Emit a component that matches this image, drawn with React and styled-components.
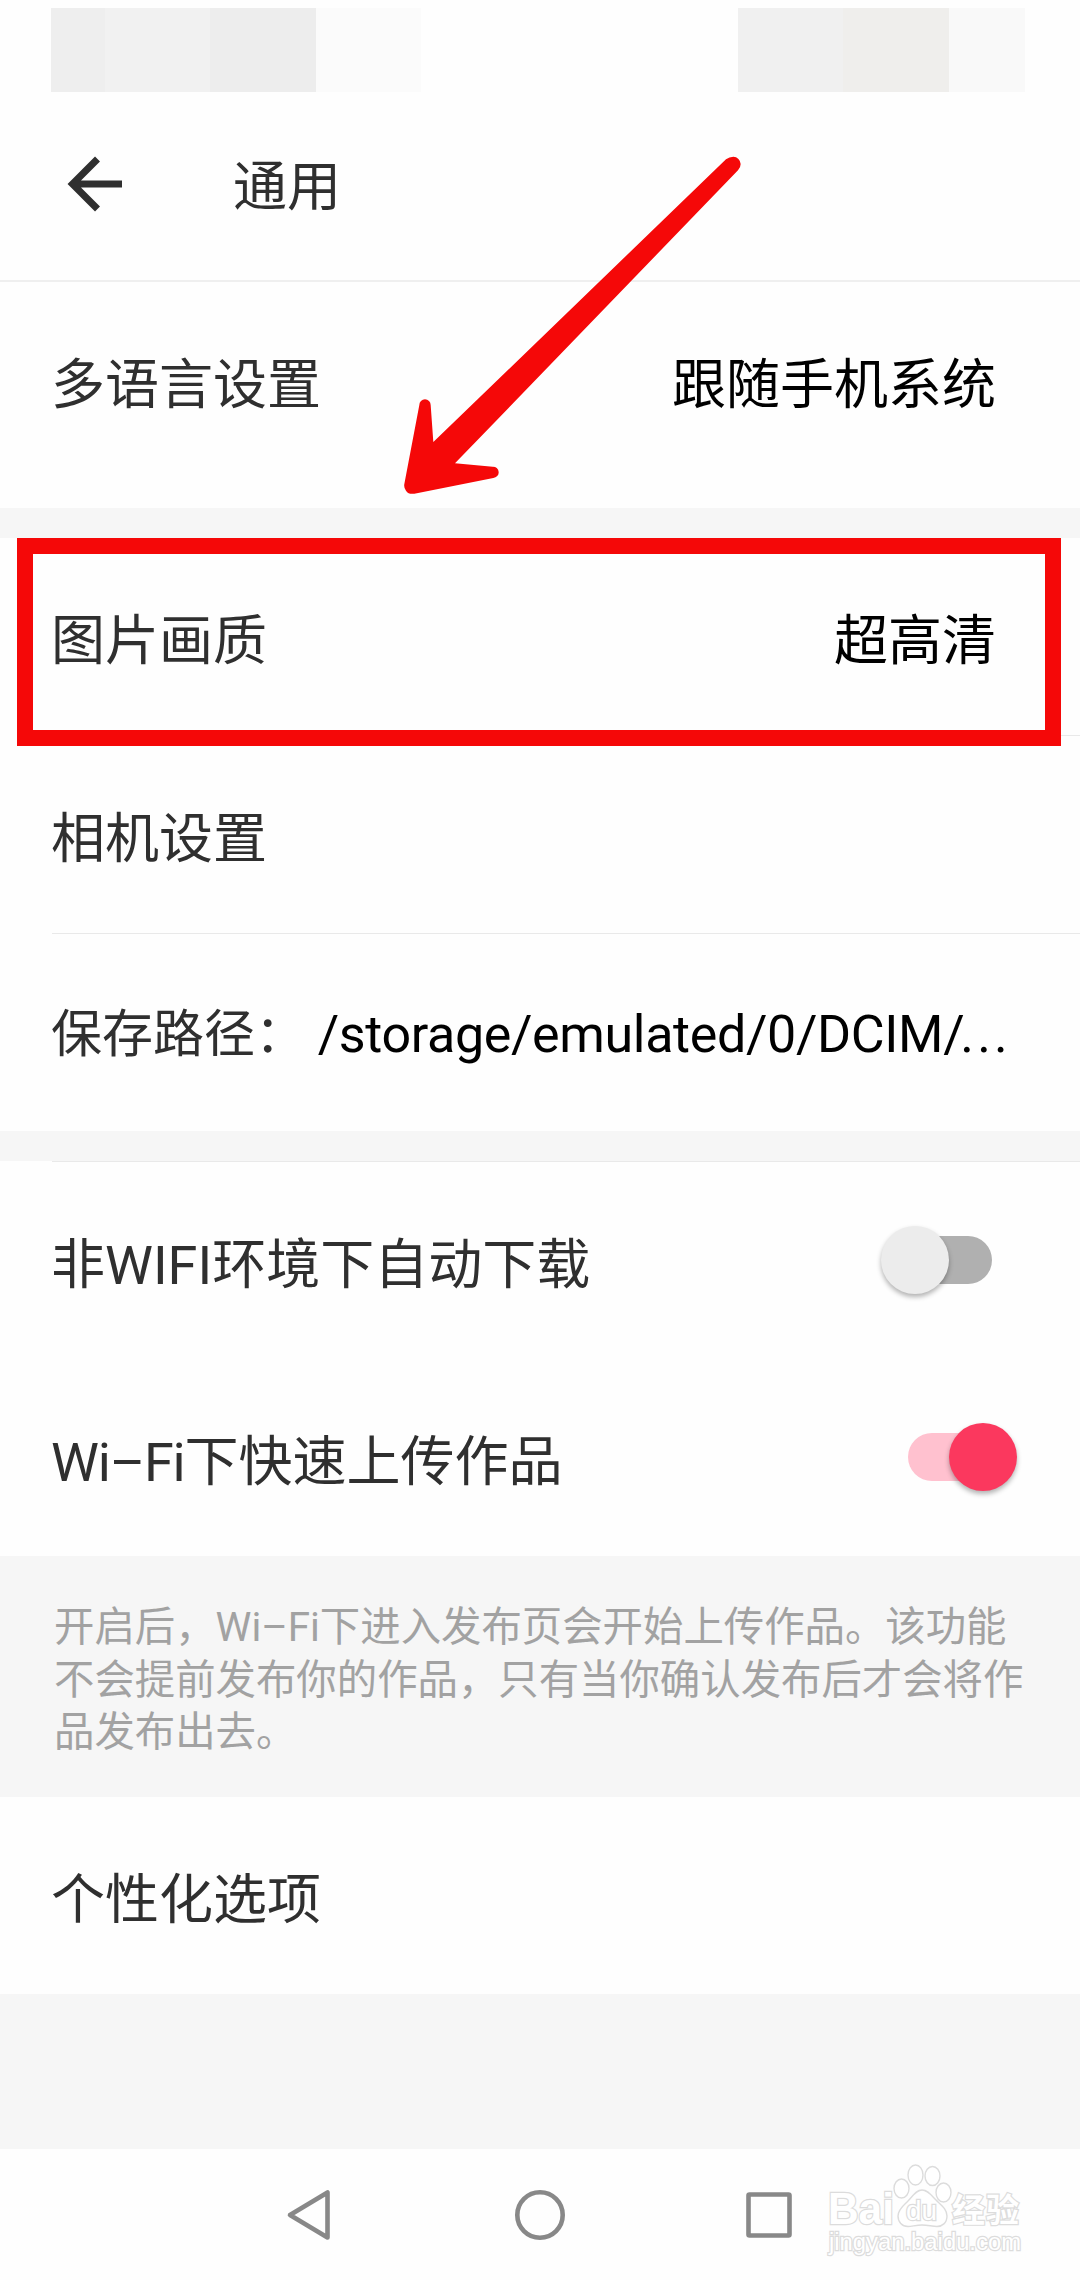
import React, { useState } from 'react';
import styled, { createGlobalStyle } from 'styled-components';

const GlobalStyle = createGlobalStyle`
  * {
    box-sizing: border-box;
  }

  body {
    margin: 0;
    background: #fefefe;
    font-family: Roboto, 'Noto Sans CJK SC', sans-serif;
    color: #2f2f2f;
  }
`;

const Page = styled.div`
  position: relative;
  display: flex;
  flex-direction: column;
  width: 1080px;
  height: 2280px;
  overflow: hidden;
  background: #fefefe;
`;

const StatusBar = styled.div`
  display: flex;
  justify-content: space-between;
  height: 92px;
  padding: 8px 55px 0 51px;
`;

const StatusGroup = styled.div`
  display: flex;
`;

const StatusBlock = styled.div`
  width: ${(props) => props.$width}px;
  background: ${(props) => props.$color};
`;

const Header = styled.header`
  display: flex;
  align-items: center;
  height: 190px;
  padding: 0 0 5px 67px;
  border-bottom: 2px solid #efefef;
`;

const BackButton = styled.button`
  display: flex;
  padding: 0;
  border: none;
  background: transparent;
  cursor: pointer;
`;

const Title = styled.h1`
  margin: 8px 0 0 110px;
  font-size: 54px;
  line-height: 60px;
  font-weight: 400;
`;

const Row = styled.div`
  display: flex;
  align-items: center;
  justify-content: space-between;
  flex: none;
  height: ${(props) => props.$height || 197}px;
  padding: ${(props) => props.$pad || '10px 84px 0 51px'};
`;

const Label = styled.span`
  font-size: ${(props) => props.$size || 54}px;
  line-height: 60px;
  white-space: nowrap;
`;

const Latin = styled.span`
  letter-spacing: -1.2px;
`;

const Value = styled.span`
  font-size: 54px;
  line-height: 60px;
  color: #000;
  white-space: nowrap;
`;

const PathValue = styled(Value)`
  font-size: 52px;
  letter-spacing: -0.35px;
`;

const Dots = styled.span`
  margin-left: -4px;
  letter-spacing: 3.2px;
`;

const Divider = styled.div`
  flex: none;
  height: 1px;
  margin-left: 52px;
  background: #e9e9e9;
`;

const Gap = styled.div`
  flex: none;
  height: ${(props) => props.$height}px;
  background: #f6f6f6;
`;

const Track = styled.button`
  position: relative;
  width: 84px;
  height: 48px;
  margin: 0 4px 12px 0;
  padding: 0;
  border: none;
  border-radius: 24px;
  background: ${(props) => (props.$on ? '#ffc1cf' : '#b0b0b0')};
  cursor: pointer;
`;

const Thumb = styled.span`
  position: absolute;
  top: -10px;
  left: ${(props) => (props.$on ? '41px' : '-27px')};
  width: 68px;
  height: 68px;
  border-radius: 50%;
  background: ${(props) => (props.$on ? '#fb385e' : '#ececec')};
  box-shadow: 0 3px 5px rgba(0, 0, 0, 0.3);
`;

const Hint = styled.p`
  flex: none;
  height: 241px;
  margin: 0;
  padding: 46px 50px 0 54px;
  background: #f6f6f6;
  color: #a2a2a2;
  font-size: 40.4px;
  line-height: 52.6px;
`;

const NavBar = styled.nav`
  display: flex;
  align-items: center;
  flex: none;
  height: 131px;
  padding-left: 286px;
`;

const NavIcon = styled.svg`
  display: block;
  flex: none;
  margin-right: ${(props) => props.$gap || 0}px;
  fill: none;
  stroke: #888;
  stroke-width: 4.6;
  stroke-linejoin: round;
`;

const Highlight = styled.div`
  position: absolute;
  top: 538px;
  left: 17px;
  width: 1044px;
  height: 208px;
  border: 16px solid #f50808;
`;

const Pointer = styled.svg`
  position: absolute;
  top: 130px;
  left: 360px;
  fill: #f50808;
`;

const Watermark = styled.svg`
  position: absolute;
  top: 2160px;
  left: 820px;
  fill: #fff;
  stroke: #dcdcdc;
  stroke-width: 1.4;

  text {
    font-family: 'Liberation Sans', 'Noto Sans CJK SC', sans-serif;
    paint-order: stroke;
    stroke-width: 2.4;
  }
`;

const Switch = ({ defaultOn }) => {
  const [on, setOn] = useState(defaultOn);
  return (
    <Track $on={on} role="switch" aria-checked={on} onClick={() => setOn(!on)}>
      <Thumb $on={on} />
    </Track>
  );
};

const App = () => {
  return (
    <Page>
      <GlobalStyle />
      <StatusBar>
        <StatusGroup>
          <StatusBlock $width={54} $color="#eeeeee" />
          <StatusBlock $width={105} $color="#f1f1f1" />
          <StatusBlock $width={106} $color="#ededed" />
          <StatusBlock $width={105} $color="#fbfbfb" />
        </StatusGroup>
        <StatusGroup>
          <StatusBlock $width={105} $color="#f0f0f0" />
          <StatusBlock $width={106} $color="#efeeec" />
          <StatusBlock $width={76} $color="#f9f9f9" />
        </StatusGroup>
      </StatusBar>

      <Header>
        <BackButton aria-label="返回">
          <svg width="56" height="56" viewBox="0 0 56 56" fill="none" stroke="#2f2f2f" strokeWidth="7">
            <path d="M55 28H6M30.5 3L5.5 28l25 25" />
          </svg>
        </BackButton>
        <Title>通用</Title>
      </Header>

      <Row $height={226} $pad="0 84px 18px 51px">
        <Label>多语言设置</Label>
        <Value>跟随手机系统</Value>
      </Row>
      <Gap $height={30} />
      <Row>
        <Label>图片画质</Label>
        <Value>超高清</Value>
      </Row>
      <Divider />
      <Row>
        <Label>相机设置</Label>
      </Row>
      <Divider />
      <Row $pad="5px 69px 0 51px">
        <Label $size={51}>保存路径：</Label>
        <PathValue>
          /storage/emulated/0/DCIM/<Dots>...</Dots>
        </PathValue>
      </Row>
      <Gap $height={30} />
      <Divider />
      <Row>
        <Label>非WIFI环境下自动下载</Label>
        <Switch defaultOn={false} />
      </Row>
      <Row>
        <Label>
          <Latin>Wi–Fi</Latin>下快速上传作品
        </Label>
        <Switch defaultOn />
      </Row>
      <Hint>
        开启后，Wi–Fi下进入发布页会开始上传作品。该功能不会提前发布你的作品，只有当你确认发布后才会将作品发布出去。
      </Hint>
      <Row>
        <Label>个性化选项</Label>
      </Row>
      <Gap $height={155} />

      <NavBar>
        <NavIcon width="46" height="52" $gap={182}>
          <path d="M4 26L41.500 3.500V48.500Z" />
        </NavIcon>
        <NavIcon width="52" height="52" $gap={178}>
          <circle cx="26" cy="26" r="22.700" />
        </NavIcon>
        <NavIcon width="50" height="52">
          <rect x="4.500" y="5.500" width="41" height="41" rx="1" />
        </NavIcon>
      </NavBar>

      <Highlight />
      <Pointer width="420" height="420" viewBox="0 0 1260 1260">
        <path d="M1098 88Q1108 80 1120 80A23 23 0 0 1 1142 102Q1142 112 1134 121L285 1000L398 1010A17 17 0 0 1 400 1044L163 1091Q146 1094 138 1082Q131 1074 133 1062L178 825A17 17 0 0 1 212 825L220 936Z" />
      </Pointer>
      <Watermark width="220" height="110">
        <text x="8" y="64" fontSize="44" fontWeight="700" textLength="66" lengthAdjust="spacingAndGlyphs">Bai</text>
        <ellipse cx="81.500" cy="28.500" rx="7.500" ry="9.500" />
        <ellipse cx="95.500" cy="15" rx="7.500" ry="10" />
        <ellipse cx="112.500" cy="16" rx="7.500" ry="9.500" />
        <ellipse cx="123.500" cy="32.500" rx="7.500" ry="9.500" />
        <path d="M102 30C108 30 111 35 116 40C121 45 127 49 127 56C127 63 122 66.500 117 66.500C112 66.500 108 65 102 65C96 65 92 66.500 88 66.500C82 66.500 78 62 78 56C78 49 84 45 88 41C93 36 96 30 102 30Z" />
        <text x="86" y="60" fontSize="27" textLength="31" lengthAdjust="spacingAndGlyphs">du</text>
        <text x="132" y="62" fontSize="33" fontWeight="700" textLength="67">经验</text>
        <text x="9" y="90" fontSize="23" textLength="192" lengthAdjust="spacingAndGlyphs">jingyan.baidu.com</text>
      </Watermark>
    </Page>
  );
};

export default App;
